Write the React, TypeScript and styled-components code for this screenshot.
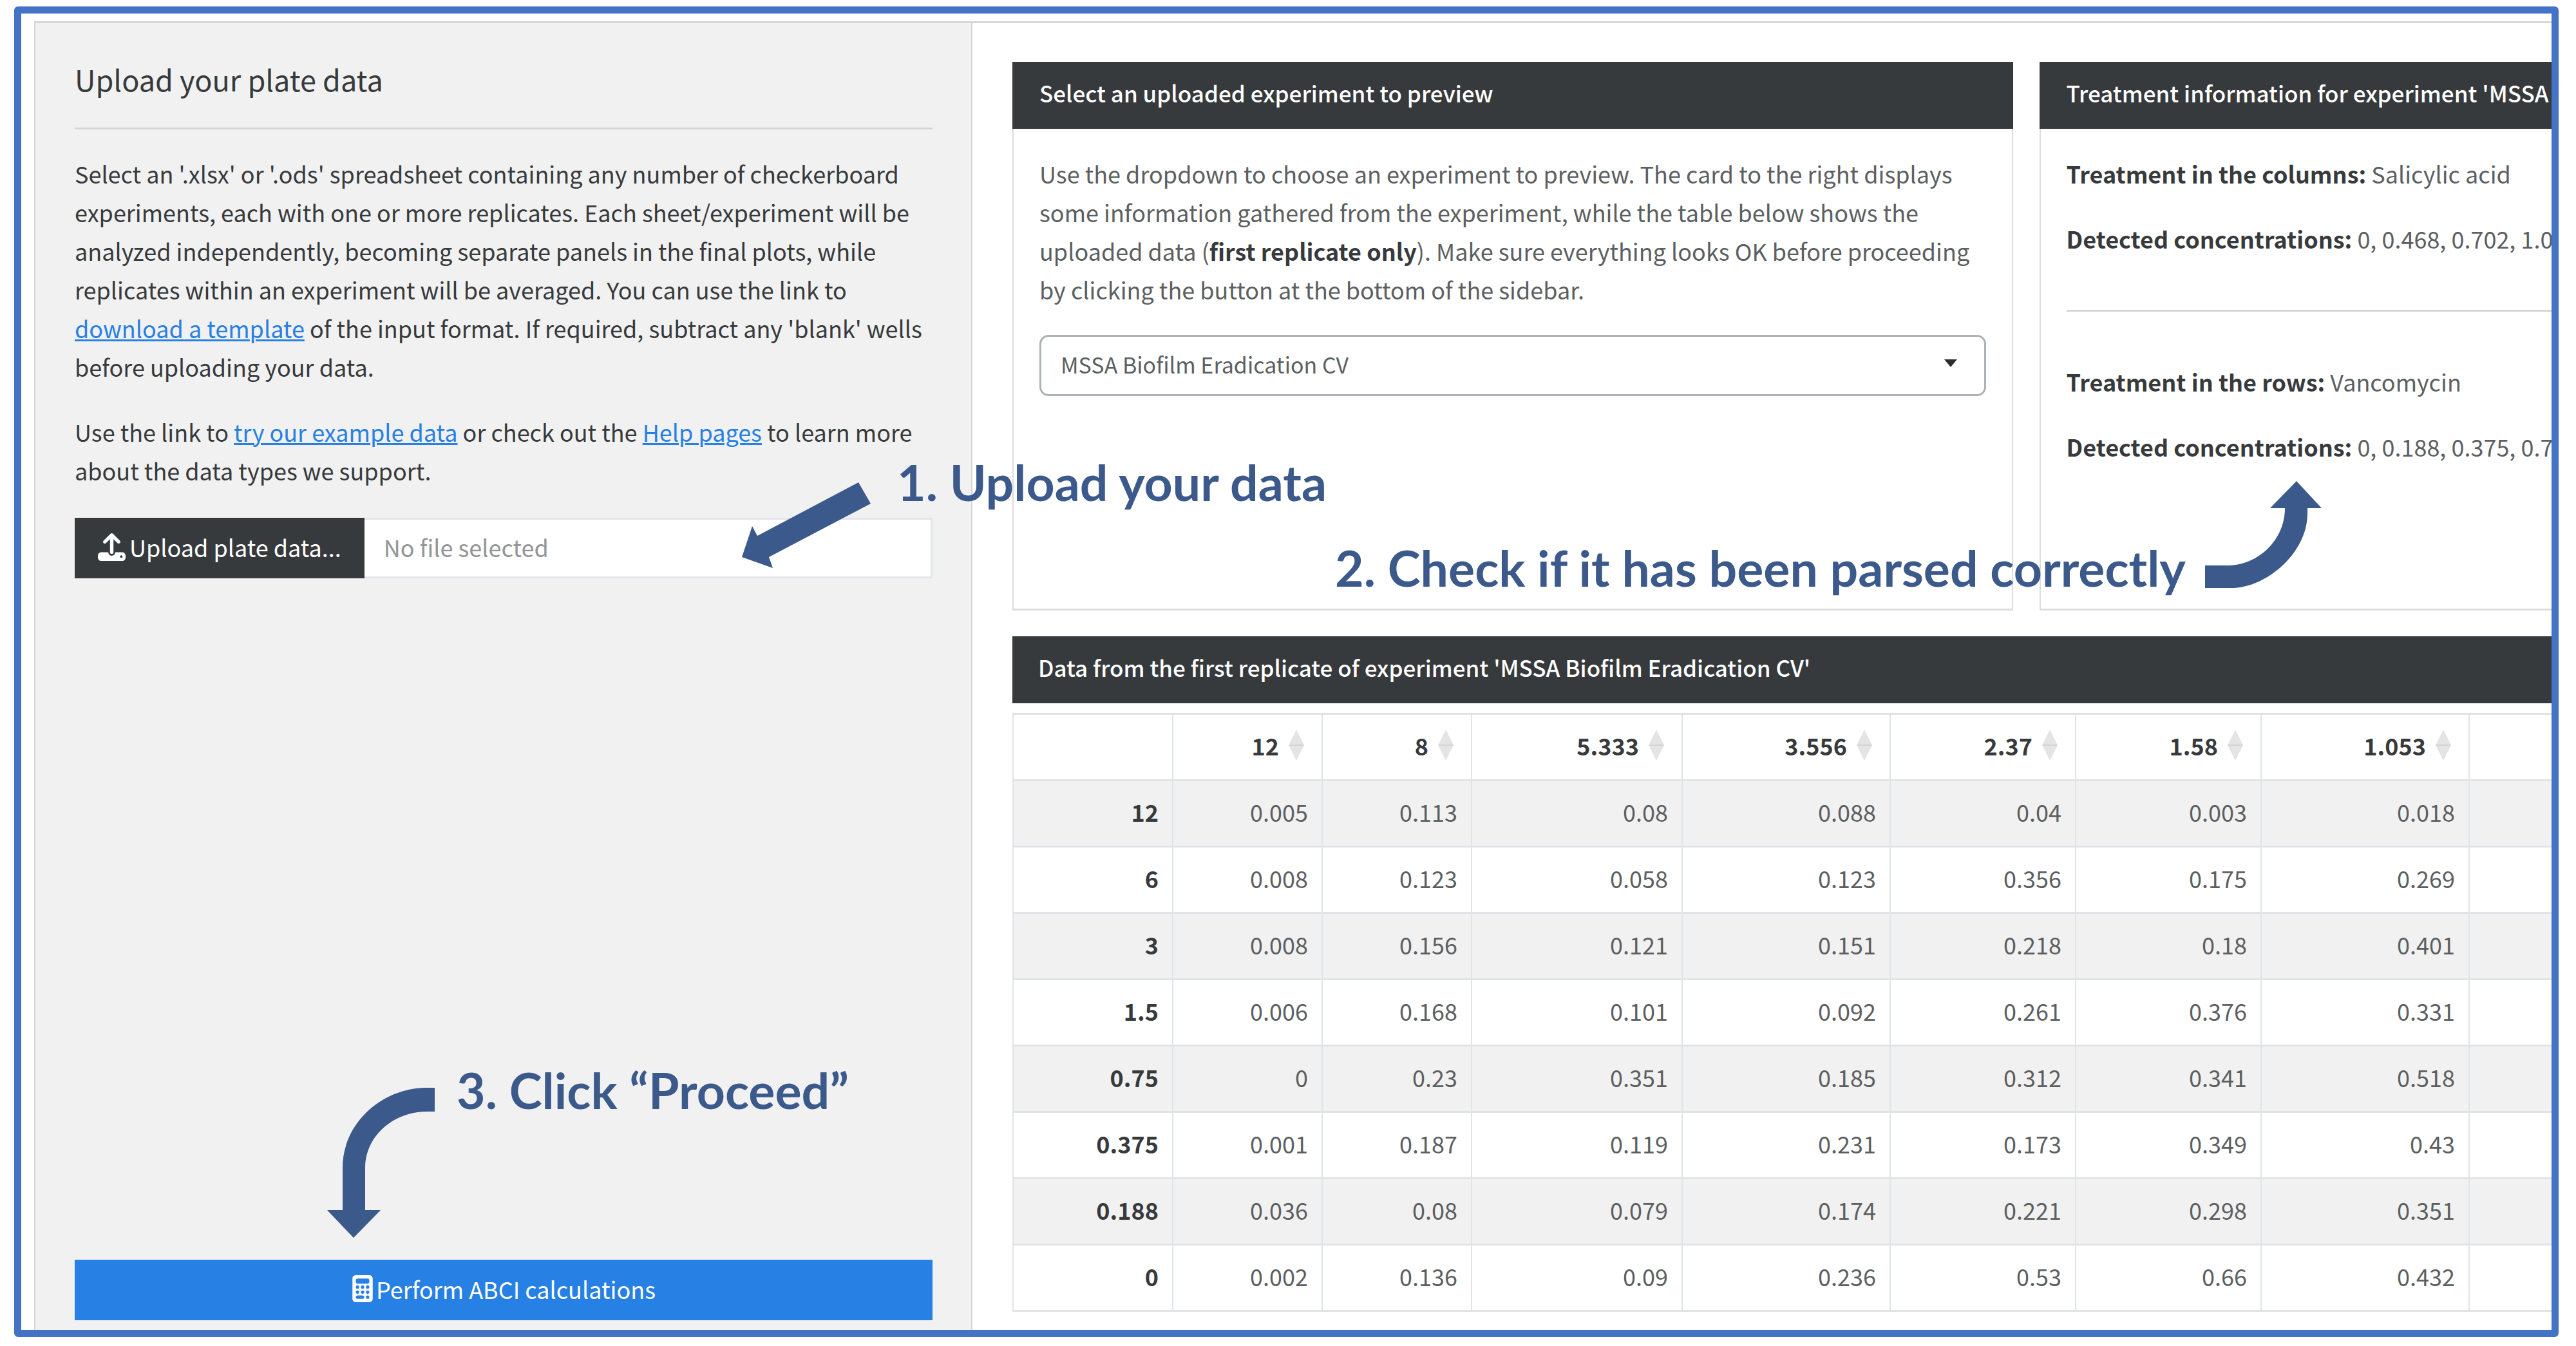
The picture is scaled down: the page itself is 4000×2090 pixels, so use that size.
import React from 'react';
import styled, { createGlobalStyle } from 'styled-components';
import { FaUpload, FaCalculator } from 'react-icons/fa6';

const ui = `"Noto Sans CJK JP", "Noto Sans CJK SC", "Noto Sans", sans-serif`;
const ink = '#373a3c';
const muted = '#5c5f61';
const rule = '#d6d6d6';
const grid = '#e1e4e7';
const blue = '#2780e3';
const note = '#3b5a8b';

const GlobalStyle = createGlobalStyle`
  *, *::before, *::after { box-sizing: border-box; }
  body { margin: 0; background: #fff; }
`;

const Frame = styled.div`
  position: relative;
  margin: 10px 27px 14px 22px;
  padding: 12px 0 0 20px;
  border: 11px solid #4472c4;
  border-radius: 6px;
  overflow: hidden;
  background: #fff;
  color: ${ink};
  font-family: ${ui};
  font-size: 36px;
  line-height: 60px;
`;

const Shell = styled.div`
  display: grid;
  grid-template-columns: 1457px minmax(0, 1fr);
  border-top: 3px solid ${rule};
`;

const Sidebar = styled.aside`
  display: flex;
  flex-direction: column;
  padding: 57px 60px 15px 61px;
  border: solid ${rule};
  border-width: 0 2px;
  background: #f1f1f1;
`;

const Title = styled.h1`
  margin: 0;
  font-size: 45px;
  font-weight: 400;
  line-height: 60px;
`;

const Rule = styled.hr<{ $before: number; $after: number }>`
  width: 100%;
  height: 3px;
  margin: ${(p) => p.$before}px 0 ${(p) => p.$after}px;
  border: 0;
  background: ${rule};
`;

const Text = styled.p`
  margin: 0 0 41px;
`;

const Link = styled.a`
  color: ${blue};
  text-decoration: underline;
  text-decoration-thickness: 3px;
`;

const FilePicker = styled.div`
  display: flex;
  height: 94px;
  margin-top: 3px;
`;

const UploadButton = styled.button`
  display: flex;
  align-items: center;
  gap: 6px;
  padding: 0 36px 4px;
  border: 0;
  background: ${ink};
  color: #fff;
  font: inherit;
  white-space: nowrap;
`;

const FileName = styled.input`
  flex: 1;
  min-width: 0;
  padding: 0 30px 4px;
  border: 3px solid #e4e6e9;
  border-left: 0;
  background: #fff;
  color: ${ink};
  font: inherit;
  &::placeholder { color: #939597; opacity: 1; }
`;

const ProceedButton = styled.button`
  display: flex;
  align-items: center;
  justify-content: center;
  height: 94px;
  margin-top: auto;
  padding: 0 4px 4px 0;
  border: 0;
  background: ${blue};
  color: #fff;
  font: inherit;
`;

const Main = styled.main`
  display: flex;
  flex-direction: column;
  min-width: 0;
  padding: 60px 0 28px 62px;
`;

const CardRow = styled.div`
  display: grid;
  grid-template-columns: 65% 65%;
  gap: 41px;
  margin-bottom: 40px;
`;

const Card = styled.section`
  min-height: 852px;
  border: solid #dcdcdc;
  border-width: 0 2px 3px;
  color: ${muted};
`;

const CardHeader = styled.h2`
  margin: 0 -2px;
  padding: 18px 42px 26px;
  background: ${ink};
  color: #fff;
  font-size: 35px;
  font-weight: 500;
  line-height: 60px;
  white-space: nowrap;
`;

const CardBody = styled.div`
  padding: 39px 40px;
`;

const Strong = styled.strong`
  color: ${ink};
  font-weight: 700;
`;

const SelectWrap = styled.div`
  position: relative;
`;

const Select = styled.select`
  display: block;
  width: 100%;
  height: 95px;
  padding: 0 30px 4px;
  border: 3px solid #adb2b8;
  border-radius: 14px;
  appearance: none;
  background: #fff;
  color: ${muted};
  font: inherit;
  font-size: 34px;
`;

const Caret = styled.svg`
  position: absolute;
  top: 38px;
  right: 45px;
  width: 20px;
  height: 12px;
  pointer-events: none;
`;

const DataHeader = styled(CardHeader)`
  margin: 0 0 15px;
  padding-left: 40px;
`;

const Table = styled.table`
  width: 100%;
  border-collapse: collapse;
  table-layout: fixed;
  color: ${muted};
`;

const Col = styled.col<{ $w?: number }>`
  width: ${(p) => (p.$w ? `${p.$w}px` : 'auto')};
`;

const Row = styled.tr<{ $shaded?: boolean }>`
  background: ${(p) => (p.$shaded ? '#f1f1f1' : '#fff')};
`;

const Cell = styled.td`
  height: 103px;
  padding: 0 21px 6px 0;
  border: solid ${grid};
  border-width: 3px 2px;
  text-align: right;
  &:last-child { border-right: 0; }
`;

const HeadCell = styled(Cell)`
  color: ${ink};
  font-weight: 700;
`;

const Sortable = styled.div`
  display: flex;
  align-items: center;
  justify-content: flex-end;
  gap: 15px;
  margin-right: 6px;
`;

const SortIcon = styled.svg`
  width: 24px;
  height: 48px;
`;

const Note = styled.div<{ $x: number; $y: number }>`
  position: absolute;
  left: ${(p) => p.$x}px;
  top: ${(p) => p.$y}px;
  color: ${note};
  font-family: Lato, "Open Sans", sans-serif;
  font-size: 77px;
  font-weight: 700;
  line-height: 90px;
  white-space: nowrap;
`;

const Arrow = styled.svg<{ $x: number; $y: number }>`
  position: absolute;
  left: ${(p) => p.$x}px;
  top: ${(p) => p.$y}px;
  fill: ${note};
`;

const columns = ['12', '8', '5.333', '3.556', '2.37', '1.58', '1.053'];
const widths = [248, 232, 232, 327, 323, 288, 288, 323];
const rows: [string, string[]][] = [
  ['12', ['0.005', '0.113', '0.08', '0.088', '0.04', '0.003', '0.018']],
  ['6', ['0.008', '0.123', '0.058', '0.123', '0.356', '0.175', '0.269']],
  ['3', ['0.008', '0.156', '0.121', '0.151', '0.218', '0.18', '0.401']],
  ['1.5', ['0.006', '0.168', '0.101', '0.092', '0.261', '0.376', '0.331']],
  ['0.75', ['0', '0.23', '0.351', '0.185', '0.312', '0.341', '0.518']],
  ['0.375', ['0.001', '0.187', '0.119', '0.231', '0.173', '0.349', '0.43']],
  ['0.188', ['0.036', '0.08', '0.079', '0.174', '0.221', '0.298', '0.351']],
  ['0', ['0.002', '0.136', '0.09', '0.236', '0.53', '0.66', '0.432']],
];

function UploadPanel() {
  return (
    <Sidebar>
      <Title>Upload your plate data</Title>
      <Rule $before={45} $after={38} />
      <Text>
        Select an '.xlsx' or '.ods' spreadsheet containing any number of checkerboard
        experiments, each with one or more replicates. Each sheet/experiment will be
        analyzed independently, becoming separate panels in the final plots, while
        replicates within an experiment will be averaged. You can use the link
        to <Link href="#template">download a template</Link> of the input format. If
        required, subtract any 'blank' wells before uploading your data.
      </Text>
      <Text>
        Use the link to <Link href="#example">try our example data</Link> or check out
        the <Link href="#help">Help pages</Link> to learn more about the data types we
        support.
      </Text>
      <FilePicker>
        <UploadButton type="button">
          <FaUpload size={43} />
          Upload plate data...
        </UploadButton>
        <FileName aria-label="Selected file" placeholder="No file selected" readOnly />
      </FilePicker>
      <ProceedButton type="button">
        <FaCalculator size={42} />
        Perform ABCI calculations
      </ProceedButton>
    </Sidebar>
  );
}

function PreviewCard() {
  return (
    <Card>
      <CardHeader>Select an uploaded experiment to preview</CardHeader>
      <CardBody>
        <Text id="preview-help">
          Use the dropdown to choose an experiment to preview. The card to the right
          displays some information gathered from the experiment, while the table below
          shows the uploaded data (<Strong>first replicate only</Strong>). Make sure
          everything looks OK before proceeding by clicking the button at the bottom of
          the sidebar.
        </Text>
        <SelectWrap>
          <Select aria-label="Experiment" aria-describedby="preview-help">
            <option>MSSA Biofilm Eradication CV</option>
          </Select>
          <Caret viewBox="0 0 20 12">
            <path d="M0 0H20L10 12Z" fill="#2b2d2f" />
          </Caret>
        </SelectWrap>
      </CardBody>
    </Card>
  );
}

function TreatmentCard() {
  return (
    <Card>
      <CardHeader>Treatment information for experiment 'MSSA</CardHeader>
      <CardBody>
        <Text><Strong>Treatment in the columns:</Strong> Salicylic acid</Text>
        <Text><Strong>Detected concentrations:</Strong> 0, 0.468, 0.702, 1.0</Text>
        <Rule $before={81} $after={78} />
        <Text><Strong>Treatment in the rows:</Strong> Vancomycin</Text>
        <Text><Strong>Detected concentrations:</Strong> 0, 0.188, 0.375, 0.7</Text>
      </CardBody>
    </Card>
  );
}

function DataTable() {
  return (
    <Table>
      <colgroup>
        {widths.map((w, i) => <Col key={i} $w={w} />)}
        <Col />
      </colgroup>
      <thead>
        <Row>
          <Cell />
          {columns.map((c) => (
            <HeadCell as="th" scope="col" key={c}>
              <Sortable>
                {c}
                <SortIcon viewBox="0 0 24 48">
                  <path d="M12 0L24 24L12 48L0 24Z" fill="#e4e4e4" />
                  <path d="M1 23H23V25H1Z" fill="#d4d4d4" />
                </SortIcon>
              </Sortable>
            </HeadCell>
          ))}
          <Cell />
        </Row>
      </thead>
      <tbody>
        {rows.map(([label, values], i) => (
          <Row key={label} $shaded={i % 2 === 0}>
            <HeadCell as="th" scope="row">{label}</HeadCell>
            {values.map((v, j) => <Cell key={j}>{v}</Cell>)}
            <Cell />
          </Row>
        ))}
      </tbody>
    </Table>
  );
}

function Walkthrough() {
  return (
    <>
      <Note $x={1360} $y={682}>1. Upload your data</Note>
      <Arrow $x={1119} $y={728} width="200" height="133" viewBox="0 0 200 133">
        <path d="M181 0L200 33L42 116L48 133L0 116L16 68L24 83Z" />
      </Arrow>
      <Note $x={2040} $y={815}>2. Check if it has been parsed correctly</Note>
      <Arrow $x={3391} $y={726} width="181" height="166" viewBox="0 0 181 166">
        <path d="M142 0L181 42H159V50C159 114 92 166 43 166H0V131H35C82 131 124 92 124 42H101Z" />
      </Arrow>
      <Note $x={676} $y={1626}>3. Click “Proceed”</Note>
      <Arrow $x={475} $y={1668} width="167" height="233" viewBox="0 0 167 233">
        <path d="M167 0H155C84 0 24 56 24 124V190H0L41 233L83 190H59V124C59 76 102 37 155 37H167Z" />
      </Arrow>
    </>
  );
}

export default function App() {
  return (
    <>
      <GlobalStyle />
      <Frame>
        <Shell>
          <UploadPanel />
          <Main>
            <CardRow>
              <PreviewCard />
              <TreatmentCard />
            </CardRow>
            <DataHeader>
              Data from the first replicate of experiment 'MSSA Biofilm Eradication CV'
            </DataHeader>
            <DataTable />
          </Main>
        </Shell>
        <Walkthrough />
      </Frame>
    </>
  );
}
